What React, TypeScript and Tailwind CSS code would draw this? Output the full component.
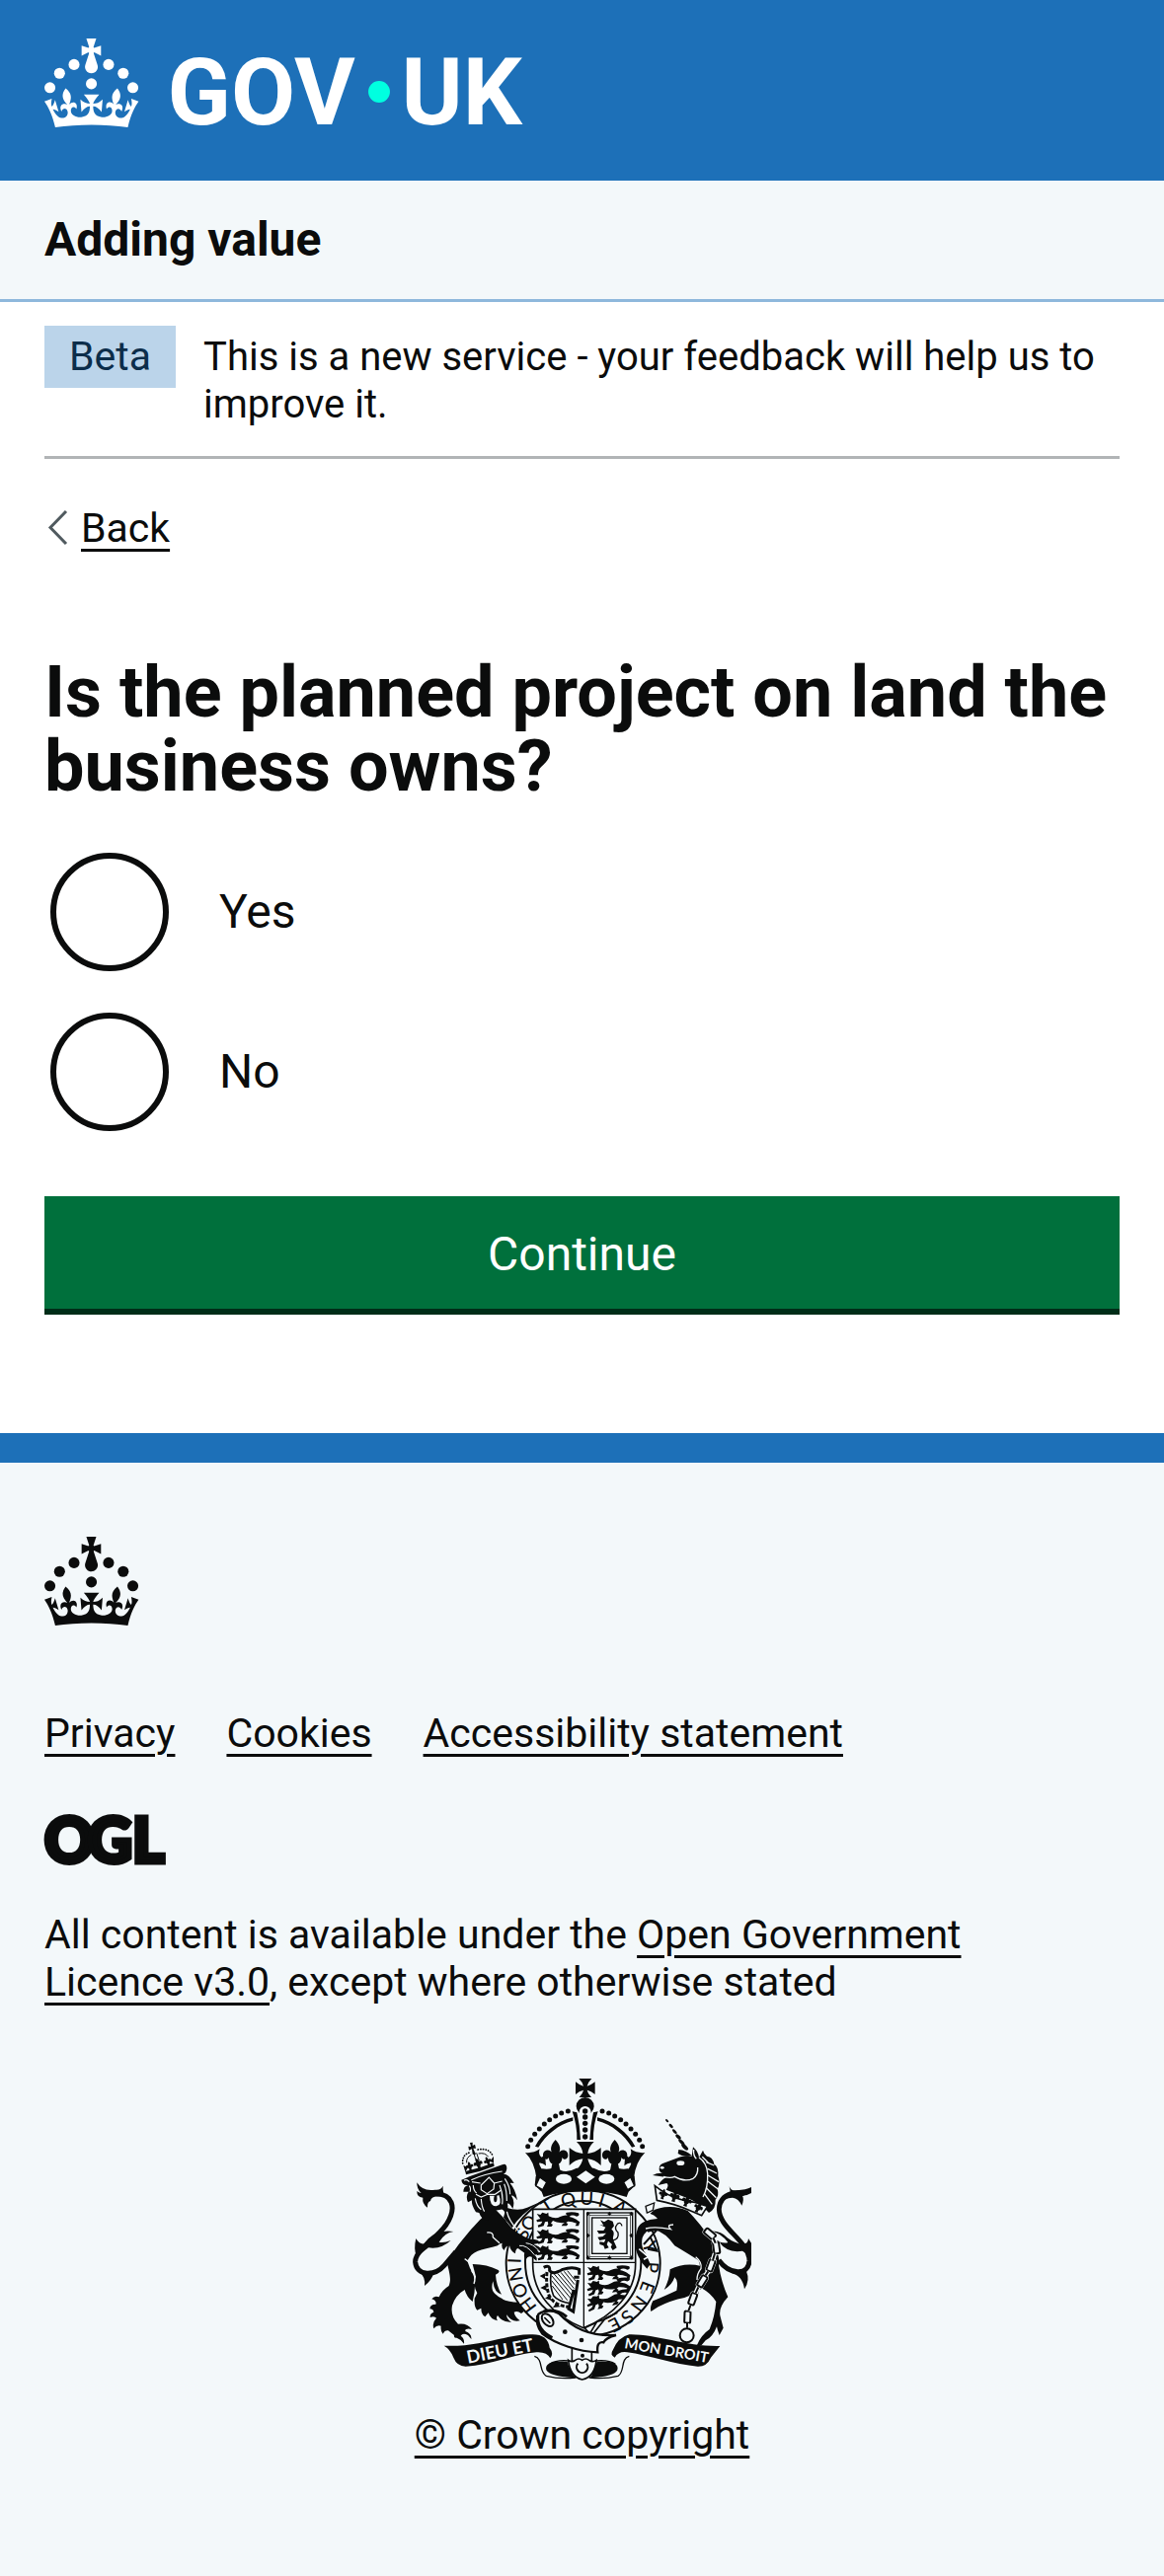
import React, { useId, useState } from "react";

const PAPER = "#f3f8fa";
const INK = "#0b0c0c";

const CROWN =
  "M33.1,9.8c.2-.1.3-.3.5-.5l4.6,2.4v-6.8l-4.6,1.5c-.1-.2-.3-.3-.5-.5l1.9-5.9h-6.7l1.9,5.9c-.2.1-.3.3-.5.5l-4.6-1.5v6.8l4.6-2.4c.1.2.3.3.5.5l-2.6,8c-.9,2.8,1.2,5.7,4.1,5.7h0c3,0,5.1-2.9,4.1-5.7l-2.6-8ZM37,37.9s-3.4,3.8-4.1,6.1c2.2,0,4.2-.5,6.4-2.8l-.7,8.5c-2-2.8-4.4-4.1-5.7-3.8.1,3.1.5,6.7,5.8,7.2,3.7.3,6.7-1.5,7-3.8.4-2.6-2-4.3-3.7-1.6-1.4-4.5,2.4-6.1,4.9-3.2-1.9-4.5-1.8-7.7,2.4-10.9,3,4,2.6,7.3-1.2,11.1,2.4-1.3,6.2,0,4,4.6-1.2-2.8-3.7-2.2-4.2.2-.3,1.7.7,3.7,3,4.2,1.9.3,4.7-.9,7-5.9-1.3,0-2.4.7-3.9,1.7l2.4-8c.6,2.3,1.4,3.7,2.2,4.5.6-1.6.5-2.8,0-5.3l5,1.8c-2.6,3.6-5.2,8.7-7.3,17.5-7.4-1.1-15.7-1.7-24.5-1.7h0c-8.8,0-17.1.6-24.5,1.7-2.1-8.9-4.7-13.9-7.3-17.5l5-1.8c-.5,2.5-.6,3.7,0,5.3.8-.8,1.6-2.3,2.2-4.5l2.4,8c-1.5-1-2.6-1.7-3.9-1.7,2.3,5,5.2,6.2,7,5.9,2.3-.4,3.3-2.4,3-4.2-.5-2.4-3-3.1-4.2-.2-2.2-4.6,1.6-6,4-4.6-3.7-3.7-4.2-7.1-1.2-11.1,4.2,3.2,4.3,6.4,2.4,10.9,2.5-2.8,6.3-1.3,4.9,3.2-1.8-2.7-4.1-1-3.7,1.6.3,2.3,3.3,4.1,7,3.8,5.4-.5,5.7-4.2,5.8-7.2-1.3-.2-3.7,1-5.7,3.8l-.7-8.5c2.2,2.3,4.2,2.7,6.4,2.8-.7-2.3-4.1-6.1-4.1-6.1h10.6,0Z";

const CROWN_PEARLS = [
  [20, 17.6],
  [10.2, 23.5],
  [3.7, 33.2],
  [43.3, 17.6],
  [53.2, 23.5],
  [59.7, 33.2],
  [31.7, 30.6],
];

function CrownMark() {
  return (
    <g>
      {CROWN_PEARLS.map(([cx, cy]) => (
        <circle key={`${cx}-${cy}`} cx={cx} cy={cy} r="3.7" />
      ))}
      <path d={CROWN} />
    </g>
  );
}

function GovUkLogo() {
  return (
    <svg viewBox="0 0 324 60" className="h-[90px] w-[486px] overflow-visible" fill="currentColor" role="img" aria-label="GOV.UK">
      <CrownMark />
      <g className="font-['Roboto',sans-serif] text-[63px] font-bold">
        <text x="83" y="58">GOV</text>
        <text x="241" y="58">UK</text>
      </g>
      <circle cx="226" cy="36" r="7.3" fill="#00ffe0" />
    </svg>
  );
}

function OglLogo() {
  return (
    <svg viewBox="0 0 123 50" className="h-[50px] w-[123px] overflow-visible" fill="currentColor" role="img" aria-label="Open Government Licence">
      <g className="font-['Lato',sans-serif] text-[62px] font-black" stroke="currentColor" strokeWidth="5">
        <text x="0" y="48">O</text>
        <text x="44" y="48">G</text>
        <text x="89" y="48">L</text>
      </g>
    </svg>
  );
}

const FLEUR =
  "M0-87C13-72 19-60 8-42C12-62 40-60 38-38C37-26 24-24 20-34C20-22 16-18 10-14L14 6H-14L-10-14C-16-18-20-22-20-34C-24-24-37-26-38-38C-40-60-12-62-8-42C-19-60-13-72 0-87Z";

const PASSANT =
  "M1 5L12 8L18 1L30 5L36 1L37 12Q58 22 72 14Q84 8 94 10Q86 4 92 1Q112-2 128 3Q133 12 122 13Q108 6 100 14Q118 18 126 26L132 30L128 42H118L122 34Q108 28 96 28L90 32L96 36L92 42H76L80 36L86 32Q62 34 50 26L44 34L50 38L46 44H32L36 36L34 28L26 30L22 42L6 46L4 40L14 36L18 28L2 30L0 24L12 20Z";

/** Letters of the garter motto with the point each is centred on. */
const MOTTO: [string, number, number][] = [
  ["H", 405, 736],
  ["O", 381, 692],
  ["N", 368, 643],
  ["I", 364, 602],
  ["S", 388, 520],
  ["O", 408, 487],
  ["T", 463, 436],
  ["Q", 527, 417],
  ["U", 583, 413],
  ["I", 628, 419],
  ["A", 684, 440],
  ["Y", 774, 560],
  ["P", 780, 622],
  ["E", 766, 682],
  ["N", 741, 732],
  ["S", 706, 772],
  ["E", 668, 795],
];

const ARCH_PEARLS = [
  [526, 147],
  [506, 153],
  [488, 162],
  [470, 173],
  [454, 186],
  [439, 201],
  [425, 217],
  [413, 235],
  [404, 254],
];

const CHAIN: [number, number, number][] = [
  [957, 520, -50],
  [977, 562, -8],
  [960, 616, 20],
  [934, 664, 32],
  [905, 718, 20],
  [889, 773, 2],
];

function HalfCrown() {
  return (
    <g>
      {ARCH_PEARLS.map(([cx, cy]) => (
        <circle key={cx} cx={cx} cy={cy} r="7.5" />
      ))}
      <path d="M541 166C492 178 448 212 426 254L436 257C460 218 496 188 541 176Z" />
      <path d="M539 148L553 151Q562 190 564 234H553Q554 190 539 148Z" />
      <path d="M396 273Q420 276 440 262Q434 280 446 287L456 280L459 313Q447 303 438 305Q442 322 456 330L430 350Q424 300 396 273Z" />
      <path d={FLEUR} transform="translate(488 321)" />
      <path d="M428 345L448 322Q474 326 488 314Q512 342 552 320H580V392Q510 390 452 408L446 392L425 372Z" />
      <path d="M440 348L461 363L449 386L428 374Z" fill={PAPER} stroke={INK} strokeWidth="4" />
      <ellipse cx="513" cy="353" rx="24" ry="15" fill={PAPER} />
    </g>
  );
}

function Lion() {
  return (
    <g>
      <path
        d="M120 398C175 396 190 440 156 492C122 540 60 570 62 606C66 650 122 648 150 616L185 575"
        fill="none"
        stroke={INK}
        strokeWidth="15"
      />
      <path d="M67 364Q84 392 122 386Q140 388 146 374Q144 398 156 408Q110 400 108 420Q98 422 99 440Q82 428 85 410Q66 408 67 390Q74 396 80 396Q66 384 67 364Z" />
      <path d="M178 513Q152 516 134 545Q150 548 170 540Q140 568 102 562L66 590Q56 566 64 534Q74 552 88 550Q122 504 178 513Z" />
      <path d="M76 638Q94 652 90 678Q110 664 118 640Z" />
      <path d="M338 440Q375 452 402 440L440 424Q380 462 356 502L330 470Z" />
      <path d="M236 612Q280 612 314 630Q322 636 306 644Q308 676 324 704Q302 700 298 664Q290 690 304 702Q330 728 376 728L392 756L384 762Q372 752 362 758Q364 772 380 784Q354 790 340 766Q338 778 354 788Q326 790 312 768Q306 776 312 784Q290 780 284 760L274 772Q262 764 262 746L250 752Q240 742 242 716L250 700Q236 676 246 650Z" />
      <path
        d="M262 474C235 500 180 566 158 606C166 640 172 658 164 678Q142 692 134 712Q120 706 112 718Q128 724 124 734Q106 734 106 748Q116 748 118 758Q106 762 107 774Q120 768 126 776Q112 790 118 808Q128 796 140 800Q138 816 146 824Q152 812 162 814L180 828Q178 838 188 836Q200 840 210 854Q212 838 200 830Q206 820 222 828L232 840Q234 824 214 816Q212 806 234 810Q220 790 192 794Q168 772 174 738Q184 706 212 690Q218 712 236 726Q248 682 240 645Q226 624 220 602C238 566 275 568 312 556Q318 548 326 548Q322 562 332 570Q336 556 348 556Q352 574 366 580Q366 566 374 564L394 578Q390 590 398 598Q404 586 416 590L430 602Q434 592 424 584L434 582Q442 578 432 570L448 572Q440 556 420 552L440 548Q440 536 412 536C370 520 350 500 335 476L300 440Z"
      />
      <path d="M280 516Q300 514 298 530L318 548" fill="none" stroke={PAPER} strokeWidth="4" />
      <path d="M378 556Q400 552 424 584M398 548Q420 550 438 572" fill="none" stroke={PAPER} strokeWidth="3" />
      <path d="M212 596Q236 610 234 634Q248 650 240 672" fill="none" stroke={PAPER} strokeWidth="4" />
      <path d="M340 452Q346 480 374 510" fill="none" stroke={PAPER} strokeWidth="4" />
      <path d="M202 356Q216 352 226 346L326 310Q340 304 340 322Q338 336 330 338Q346 338 362 366Q352 364 350 366Q366 384 372 418Q360 402 354 404Q366 420 358 444Q348 426 342 428Q346 446 336 458Q328 444 322 446L300 450L282 480Q262 476 256 456L246 454Q232 432 234 418L222 424Q214 404 224 392L208 392Q208 376 222 372Q204 374 202 356Z" />
      <g fill="none" stroke={PAPER} strokeWidth="3.5">
        <path d="M210 358Q218 352 226 362M232 356Q270 338 326 330" />
        <path d="M234 362L260 366M262 372L286 348L302 366L300 384L280 398L262 386ZM302 366L326 360" />
        <path d="M238 372Q238 388 248 396M246 400L262 408L282 400L304 400L322 388" />
        <path d="M244 412Q248 436 262 446M262 414Q264 440 272 452M318 372Q330 400 326 430M334 352Q350 376 350 400M332 368Q340 388 340 420M226 374Q232 382 228 392" />
      </g>
      <path d="M288 404Q288 436 308 436Q328 432 316 402L310 404Q312 424 304 424Q298 420 302 404Z" fill={PAPER} />
      <g>
        <path d="M214 330Q256 322 300 304L302 314Q258 332 216 340Z" />
        <path d={FLEUR} transform="translate(230 326) rotate(-14) scale(.3)" />
        <path d={FLEUR} transform="translate(257 320) rotate(-18) scale(.36)" />
        <path d={FLEUR} transform="translate(286 310) rotate(-22) scale(.3)" />
        <path d="M208 312L222 318L214 332ZM300 284L288 300L300 304Z" />
        <path d="M206 306Q204 278 230 272M252 264Q284 258 296 280" fill="none" stroke={INK} strokeWidth="5" strokeLinecap="round" strokeDasharray="1 7" />
        <path d="M218 304Q216 288 232 280M254 276Q274 272 284 286M240 276L248 302M248 274L256 298" fill="none" stroke={INK} strokeWidth="3" />
        <path d="M228 243L236 242L236 252L243 248L246 260L238 260L243 272Q248 276 244 280L236 278L234 262L225 266L223 254L231 255Z" />
      </g>
    </g>
  );
}

function Unicorn() {
  return (
    <g>
      <path
        d="M1062 398C1000 384 965 432 998 484C1020 520 1078 556 1077 602C1074 650 1016 644 984 600"
        fill="none"
        stroke={INK}
        strokeWidth="15"
      />
      <path d="M1016 376Q1022 392 1040 388Q1066 386 1083 378V396Q1070 404 1056 404Q1062 414 1054 434Q1044 412 1026 410Q1000 410 990 430Q994 402 1020 396Z" />
      <path d="M960 512Q990 510 1010 532Q1030 548 1056 552Q1074 550 1074 534L1083 548V590L1056 572Q1010 580 984 544Q1004 550 1012 546Q990 516 960 512Z" />
      <path d="M1022 640Q1056 646 1062 688Q1080 662 1068 634Z" />
      <path d="M836 628Q880 606 930 618L936 660Q914 704 880 714Q838 722 800 742L778 756Q774 742 784 724Q826 706 856 692Q862 664 850 652Q842 676 818 690Q834 660 836 628Z" />
      <path d="M768 456Q830 424 890 450Q926 486 966 545Q988 580 984 616Q992 668 1012 712Q984 742 988 768L998 806L986 828Q980 812 978 802Q966 834 944 844L932 858H918Q930 828 956 810Q972 772 976 726Q960 700 934 686L924 690Q922 716 908 724Q914 704 904 694Q896 660 920 640Q932 618 922 600Q880 574 850 556Q822 516 790 508Q762 504 752 532Q746 560 762 580L776 612L766 626Q740 600 732 566Q728 528 738 502Q748 478 798 474Q790 462 768 456Z" />
      <path d="M768 512Q782 508 796 508L756 552M776 530L796 572L768 566" fill="none" stroke={INK} strokeWidth="6" />
      <path d="M846 492Q824 492 838 506Q790 496 762 504" fill="none" stroke={PAPER} strokeWidth="4" />
      <path d="M914 590Q934 606 930 626Q918 640 918 660" fill="none" stroke={PAPER} strokeWidth="4" />
      <path d="M742 566L770 590L756 598M764 424L790 418L786 446L770 460" fill="none" stroke={PAPER} strokeWidth="5" />
      <path d="M762 436L788 426L784 448L766 456Z" fill={PAPER} stroke={INK} strokeWidth="4" />

      <path d="M803 324Q802 308 820 304L868 286Q890 280 902 284L906 256Q922 270 924 288L936 266Q938 276 948 284Q966 286 970 308Q984 316 982 344Q990 364 980 384Q986 404 974 416Q976 444 954 456Q930 426 880 408L824 386Q834 372 826 366L800 372Q812 352 826 348L783 342Q796 334 820 336Q804 336 803 324Z" />
      <ellipse cx="868" cy="305" rx="12" ry="7" fill={PAPER} />
      <ellipse cx="812" cy="319" rx="6" ry="4" fill={PAPER} />
      <g fill="none" stroke={PAPER} strokeWidth="4">
        <path d="M816 346Q838 352 850 346Q880 364 906 352Q922 340 920 318" />
        <path d="M908 264Q906 282 916 292M924 288Q948 304 950 336Q952 380 936 408" />
        <path d="M934 286L952 304M946 302L970 312M950 322L978 336M951 342L984 362M950 360L982 384M946 380L976 410M940 398L964 430" />
      </g>
      <path d="M790 374L806 386Q850 418 912 424L950 436L932 464L904 452Q850 428 796 418Z" fill={PAPER} stroke={INK} strokeWidth="5" />
      <path d={FLEUR} transform="translate(812 412) rotate(14) scale(.34)" />
      <path d={FLEUR} transform="translate(846 420) rotate(16) scale(.4)" />
      <path d={FLEUR} transform="translate(882 434) rotate(20) scale(.4)" />
      <path d={FLEUR} transform="translate(916 452) rotate(28) scale(.36)" />

      {[
        [827, 176, 6, 3],
        [839, 192, 8, 4],
        [850, 209, 9, 4],
        [861, 225, 10, 5],
        [871, 241, 12, 5],
        [881, 256, 13, 6],
      ].map(([x, y, rx, ry]) => (
        <ellipse key={x} rx={rx} ry={ry} transform={`translate(${x} ${y}) rotate(44)`} />
      ))}
      <path d="M862 264Q884 266 902 282Q876 288 860 276Z" />

      {CHAIN.map(([x, y, turn]) => (
        <g key={y} transform={`translate(${x} ${y}) rotate(${turn})`}>
          <rect x="-13" y="-23" width="26" height="46" rx="9" fill={PAPER} />
          <rect x="-9" y="-18" width="18" height="36" rx="5" fill={PAPER} stroke={INK} strokeWidth="6" />
        </g>
      ))}
      <path d="M968 534L974 548M972 580L966 600M952 634L944 646M922 682L914 700M898 738L892 754M888 792V806" stroke={PAPER} strokeWidth="14" />
      <path d="M968 534L974 548M972 580L966 600M952 634L944 646M922 682L914 700M898 738L892 754M888 792V806" stroke={INK} strokeWidth="6" />
      <circle cx="887" cy="829" r="21" fill="none" stroke={INK} strokeWidth="6" />
    </g>
  );
}

function Shield() {
  const clip = useId();
  const outline = "M419 445H731V612C731 700 664 770 573 806C480 770 419 700 419 612Z";
  return (
    <g>
      <clipPath id={clip}>
        <path d={outline} />
      </clipPath>
      <path d={outline} fill={PAPER} stroke={INK} strokeWidth="5" />
      <path d="M574 445V806M419 607H731" stroke={INK} strokeWidth="4" />
      <g clipPath={`url(#${clip})`}>
        {[454, 505, 555].map((y) => (
          <path key={y} d={PASSANT} transform={`translate(430 ${y})`} />
        ))}
        {[616, 664, 712].map((y) => (
          <path key={y} d={PASSANT} transform={`translate(584 ${y}) skewY(${(y - 616) / -8})`} />
        ))}
      </g>

      <g fill="none" stroke={INK}>
        <rect x="584" y="456" width="138" height="140" strokeWidth="4" />
        <rect x="591" y="463" width="124" height="126" strokeWidth="2" />
        <rect x="599" y="471" width="106" height="109" strokeWidth="4" />
      </g>
      {[
        [587, 459],
        [652, 459],
        [718, 459],
        [587, 525],
        [718, 525],
        [587, 592],
        [652, 592],
        [718, 592],
      ].map(([x, y]) => (
        <path key={`${x}-${y}`} d="M0-7L3-2L7 0L3 2L0 7L-3 2L-7 0L-3-2Z" transform={`translate(${x} ${y})`} />
      ))}
      <path d="M624 478L636 484L648 476L662 482L666 496L658 506Q668 512 664 526Q660 536 668 548L674 562L662 570L656 560L660 552L648 542L644 552L650 562L638 566L634 556L622 552V544L636 546L640 536L622 540L616 530L632 528L642 518L620 520L614 510L634 510L640 500L622 492L634 494Z" />
      <path d="M662 540Q682 536 678 516Q664 504 676 490Q686 482 690 496" fill="none" stroke={INK} strokeWidth="4" />

      <g fill="none" stroke={INK}>
        <path d="M452 622Q472 612 470 632Q480 646 510 628Q540 618 560 628V644M560 652H544M556 660L542 756L528 748L544 690" strokeWidth="9" />
        <path d="M462 636Q458 676 468 706Q484 740 532 742" strokeWidth="9" strokeDasharray="12 5" />
        <path d="M474 640Q470 680 482 708Q496 726 536 732" strokeWidth="5" />
        <path d="M484 642L538 706M494 640L542 696M504 637L544 686M514 634L546 674M524 632L550 664M477 648L534 716M476 662L524 722M478 678L510 720" strokeWidth="3" />
      </g>
      <path d="M440 648L456 640V658ZM442 684L458 676L462 694ZM456 716L470 706L476 722ZM480 744L490 730L502 742Z" />
    </g>
  );
}

function Ribbon() {
  return (
    <g>
      <path d="M424 892C452 900 436 940 460 952Q500 962 548 957L530 906Q490 902 470 916M712 892C684 900 700 940 678 952Q636 962 592 957L610 906Q650 902 670 916" fill="none" stroke={INK} strokeWidth="4" />
      <path d="M460 934Q452 904 524 908Q530 932 548 958Q470 954 460 934Z" />
      <path d="M676 934Q684 904 614 908Q608 932 594 958Q668 954 676 934Z" />
      <path d="M149 860C250 866 340 826 410 826Q464 822 470 866Q484 884 472 898Q462 878 430 880C370 884 290 918 215 923Q188 922 178 896Q168 870 149 860Z" />
      <path d="M988 861C890 864 790 824 712 826Q678 834 662 874Q652 888 668 896Q680 876 706 880C770 888 850 918 920 923Q948 924 960 896Z" />
      <g fill={PAPER} className="font-['Lato',sans-serif] font-bold">
        <text transform="translate(222 914) rotate(-11)" className="text-[54px]">
          DIEU ET
        </text>
        <text transform="translate(696 867) rotate(10)" className="text-[44px]">
          MON DROIT
        </text>
      </g>
    </g>
  );
}

function Belt() {
  return (
    <g stroke={INK} fill={PAPER}>
      <path d="M538 862V908H598V876" strokeWidth="5" />
      <path d="M576 806L612 790L592 824ZM604 822L640 776L676 760" fill="none" strokeWidth="5" />
      <path d="M436 764Q466 744 498 762C540 806 590 832 672 828Q640 836 634 850Q612 846 616 880C560 878 490 856 448 824Q424 792 436 764Z" strokeWidth="7" />
      <path d="M434 768Q430 812 478 836" fill="none" strokeWidth="10" />
      <path d="M452 756Q490 746 522 772" fill="none" strokeWidth="9" />
      <ellipse cx="464" cy="782" rx="14" ry="22" transform="rotate(-40 464 782)" strokeWidth="6" />
      <path d="M454 774L472 792" strokeWidth="5" />
      <g fill={INK} stroke="none">
        <circle cx="517" cy="818" r="7" />
        <circle cx="567" cy="843" r="7" />
        <circle cx="570" cy="890" r="6" />
      </g>
      <path d="M527 904Q538 912 548 904Q558 896 569 904Q580 896 590 904Q600 912 612 904Q608 954 569 963Q532 954 527 904Z" strokeWidth="5" />
      <path d="M556 914A17 17 0 1 0 582 914" fill="none" strokeWidth="6" />
    </g>
  );
}

function RoyalArms() {
  return (
    <svg viewBox="54 48 1029 918" className="h-[306px] w-[343px]" fill={INK} aria-hidden="true">
      <ellipse cx="572" cy="610" rx="234" ry="222" fill={PAPER} stroke={INK} strokeWidth="6" />
      <ellipse cx="572" cy="606" rx="176" ry="186" fill={PAPER} stroke={INK} strokeWidth="6" />
      <g className="font-['Lato',sans-serif] text-[56px] font-medium" textAnchor="middle">
        {MOTTO.map(([letter, x, y], i) => (
          <text
            key={i}
            y="19"
            transform={`translate(${x} ${y}) rotate(${(Math.atan2(x - 572, 610 - y) * 180) / Math.PI})`}
          >
            {letter}
          </text>
        ))}
      </g>
      <Shield />
      <Lion />
      <Unicorn />
      <Ribbon />
      <Belt />

      <HalfCrown />
      <g transform="translate(1156 0) scale(-1 1)">
        <HalfCrown />
      </g>
      <path d="M559 48H598Q586 60 584 71Q596 68 608 58V96Q596 86 584 83Q586 94 597 105H560Q571 94 573 83Q560 86 549 96V58Q560 68 573 71Q571 60 559 48Z" />
      <circle cx="578" cy="132" r="27" />
      <path d="M560 165V150A18 18 0 0 1 596 150V165Z" fill={PAPER} />
      {[147, 165, 184, 204, 225].map((cy) => (
        <circle key={cy} cx="578" cy={cy} r="8" />
      ))}
      <path
        d="M552 240H605Q588 256 586 276Q608 274 626 258V312Q608 294 586 292Q590 312 604 324H552Q567 312 571 292Q548 294 530 312V258Q548 274 571 276Q569 256 552 240Z"
      />
      <path d="M580 328L608 347L580 367L552 347Z" fill={PAPER} />
    </svg>
  );
}

const linkClass = "underline decoration-[3px] underline-offset-[7px]";

function Radio({ value, label, checked, onChange }: { value: string; label: string; checked: boolean; onChange: (value: string) => void }) {
  const id = useId();
  return (
    <div className="flex items-center">
      <input
        id={id}
        type="radio"
        name="land-ownership"
        value={value}
        checked={checked}
        onChange={() => onChange(value)}
        className="mx-[6px] size-[120px] shrink-0 cursor-pointer appearance-none rounded-full border-[6px] border-[#0b0c0c] bg-clip-content p-[24px] checked:bg-[#0b0c0c]"
      />
      <label htmlFor={id} className="cursor-pointer px-[45px] text-[48px] leading-[60px]">
        {label}
      </label>
    </div>
  );
}

export default function App() {
  const [answer, setAnswer] = useState("");

  return (
    <div className="flex min-h-screen flex-col bg-white font-['Roboto',sans-serif] text-[41px] leading-[48px] text-[#0b0c0c]">
      <header>
        <div className="bg-[#1d70b8] px-[45px] pt-[39px] pb-[54px] text-white">
          <a href="#" className="block w-fit">
            <GovUkLogo />
          </a>
        </div>
        <div className="border-b-[3px] border-[#8eb8dc] bg-[#f3f8fa] px-[45px] py-[30px]">
          <a href="#" className="text-[48px] leading-[60px] font-bold">
            Adding value
          </a>
        </div>
      </header>

      <div className="grow px-[45px]">
        <div className="flex items-start gap-[28px] border-b-[3px] border-[#b1b4b6] pt-[24px] pb-[28px]">
          <strong className="bg-[#bbd4ea] px-[25px] pt-[7px] pb-[8px] font-normal text-[#0c2d4a]">Beta</strong>
          <p className="pt-[8px] text-[40px]">This is a new service - your feedback will help us to improve it.</p>
        </div>

        <a href="#" className="mt-[46px] flex w-fit items-center">
          <svg viewBox="0 0 37 48" className="h-[48px] w-[37px]" fill="none" stroke="#505a5f" strokeWidth="3" aria-hidden="true">
            <path d="M22 7L6 23.5L22 40" />
          </svg>
          <span className={linkClass}>Back</span>
        </a>

        <main>
          <form className="mt-[105px]" onSubmit={(event) => event.preventDefault()}>
            <fieldset>
              <legend>
                <h1 className="text-[72px] leading-[75px] font-bold">Is the planned project on land the business owns?</h1>
              </legend>
              <div className="mt-[50px] flex flex-col gap-[42px]">
                <Radio value="yes" label="Yes" checked={answer === "yes"} onChange={setAnswer} />
                <Radio value="no" label="No" checked={answer === "no"} onChange={setAnswer} />
              </div>
            </fieldset>
            <button
              type="submit"
              className="mt-[66px] mb-[120px] block w-full cursor-pointer border-b-[6px] border-[#002d18] bg-[#00703c] pt-[29px] pb-[25px] text-[48px] leading-[60px] text-white"
            >
              Continue
            </button>
          </form>
        </main>
      </div>

      <footer className="border-t-[30px] border-[#1d70b8] bg-[#f3f8fa] px-[45px] pt-[75px] pb-[119px]">
        <svg viewBox="0 0 64 60" className="h-[90px] w-[96px]" fill="currentColor" aria-hidden="true">
          <CrownMark />
        </svg>
        <ul className="mt-[85px] flex flex-wrap gap-x-[52px]">
          {["Privacy", "Cookies", "Accessibility statement"].map((name) => (
            <li key={name}>
              <a href="#" className={linkClass}>
                {name}
              </a>
            </li>
          ))}
        </ul>
        <div className="mt-[59px]">
          <OglLogo />
        </div>
        <p className="mt-[47px] mr-[45px]">
          All content is available under the{" "}
          <a href="#" className={linkClass}>
            Open Government Licence v3.0
          </a>
          , except where otherwise stated
        </p>
        <a href="#" className="mx-auto mt-[74px] flex w-fit flex-col items-center gap-[31px]">
          <RoyalArms />
          <span className={linkClass}>© Crown copyright</span>
        </a>
      </footer>
    </div>
  );
}
